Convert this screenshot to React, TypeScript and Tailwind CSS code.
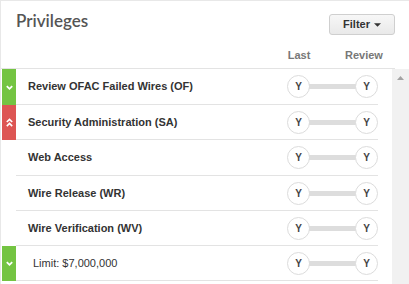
import React from "react";

type Row = {
  label: string;
  badge?: "down" | "up";
  plain?: boolean;
  tall?: boolean;
};

const rows: Row[] = [
  { label: "Review OFAC Failed Wires (OF)", badge: "down", tall: true },
  { label: "Security Administration (SA)", badge: "up" },
  { label: "Web Access", tall: true },
  { label: "Wire Release (WR)" },
  { label: "Wire Verification (WV)" },
  { label: "Limit: $7,000,000", badge: "down", plain: true },
];

function Badge({ kind }: { kind?: "down" | "up" }) {
  if (!kind) return <div className="w-[14px] shrink-0" />;
  if (kind === "down") {
    return (
      <div className="w-[14px] shrink-0 bg-[#74c442] flex items-center justify-center">
        <svg viewBox="0 0 10 10" className="w-[9px] h-[9px]">
          <path d="M2 3.5l3 3 3-3" fill="none" stroke="white" strokeWidth="2" />
        </svg>
      </div>
    );
  }
  return (
    <div className="w-[14px] shrink-0 bg-[#dd5553] flex items-center justify-center">
      <svg viewBox="0 0 10 12" className="w-[9px] h-[11px]">
        <path d="M2 5.5l3-3 3 3M2 10l3-3 3 3" fill="none" stroke="white" strokeWidth="1.8" />
      </svg>
    </div>
  );
}

function Circle() {
  return (
    <div className="w-[23px] h-[23px] rounded-full border border-[#dcdcdc] bg-white flex items-center justify-center text-[10px] font-bold text-[#444] shrink-0">
      Y
    </div>
  );
}

function Toggle() {
  return (
    <div className="flex items-center">
      <Circle />
      <div className="w-[47px] h-[5px] bg-[#dddddd] -mx-px" />
      <Circle />
    </div>
  );
}

export default function App() {
  return (
    <div
      className="w-[409px] h-[284px] overflow-hidden bg-white border-t border-l border-[#e8e8e8] flex flex-col"
      style={{ fontFamily: '"Liberation Sans", Arial, sans-serif' }}
    >
      <div className="h-[68px] w-[394px] shrink-0 border-b border-[#e3e3e3] flex flex-col">
        <div className="flex items-start justify-between pl-[15px]">
          <h1
            className="text-[17px] font-semibold text-[#555] mt-[9px] leading-[22px]"
            style={{ fontFamily: "Lato, sans-serif" }}
          >
            Privileges
          </h1>
          <button className="mt-[13px] w-[66px] h-[21px] rounded-[3px] border border-[#cfcfcf] bg-gradient-to-b from-[#f7f7f7] to-[#e9e9e9] text-[11px] font-bold text-[#333] flex items-center justify-center gap-[4px]">
            Filter
            <svg viewBox="0 0 8 4" className="w-[7px] h-[4px]">
              <path d="M0 0h8L4 4z" fill="#333" />
            </svg>
          </button>
        </div>
        <div className="flex items-center text-[11px] font-bold text-[#777] mt-[12px]">
          <span className="ml-[286px] w-[24px] text-center">Last</span>
          <span className="ml-[34px]">Review</span>
        </div>
      </div>
      <div className="flex flex-1 min-h-0">
        <div className="flex-1 pl-px pr-[14px]">
          {rows.map((r) => (
            <div key={r.label} className={r.tall ? "flex h-[36px]" : "flex h-[35px]"}>
              <Badge kind={r.badge} />
              <div className="flex-1 flex items-center justify-between border-b border-[#e3e3e3]">
                <span
                  className={
                    r.plain
                      ? "pl-[17px] text-[11px] text-[#333]"
                      : "pl-[12px] text-[11px] font-bold text-[#333]"
                  }
                >
                  {r.label}
                </span>
                <Toggle />
              </div>
            </div>
          ))}
        </div>
        <div className="w-[17px] shrink-0 bg-[#f1f1f1] flex justify-center pt-[7px]">
          <svg viewBox="0 0 7 4" className="w-[7px] h-[4px]">
            <path d="M0 4L3.5 0L7 4z" fill="#a3a3a3" />
          </svg>
        </div>
      </div>
    </div>
  );
}
